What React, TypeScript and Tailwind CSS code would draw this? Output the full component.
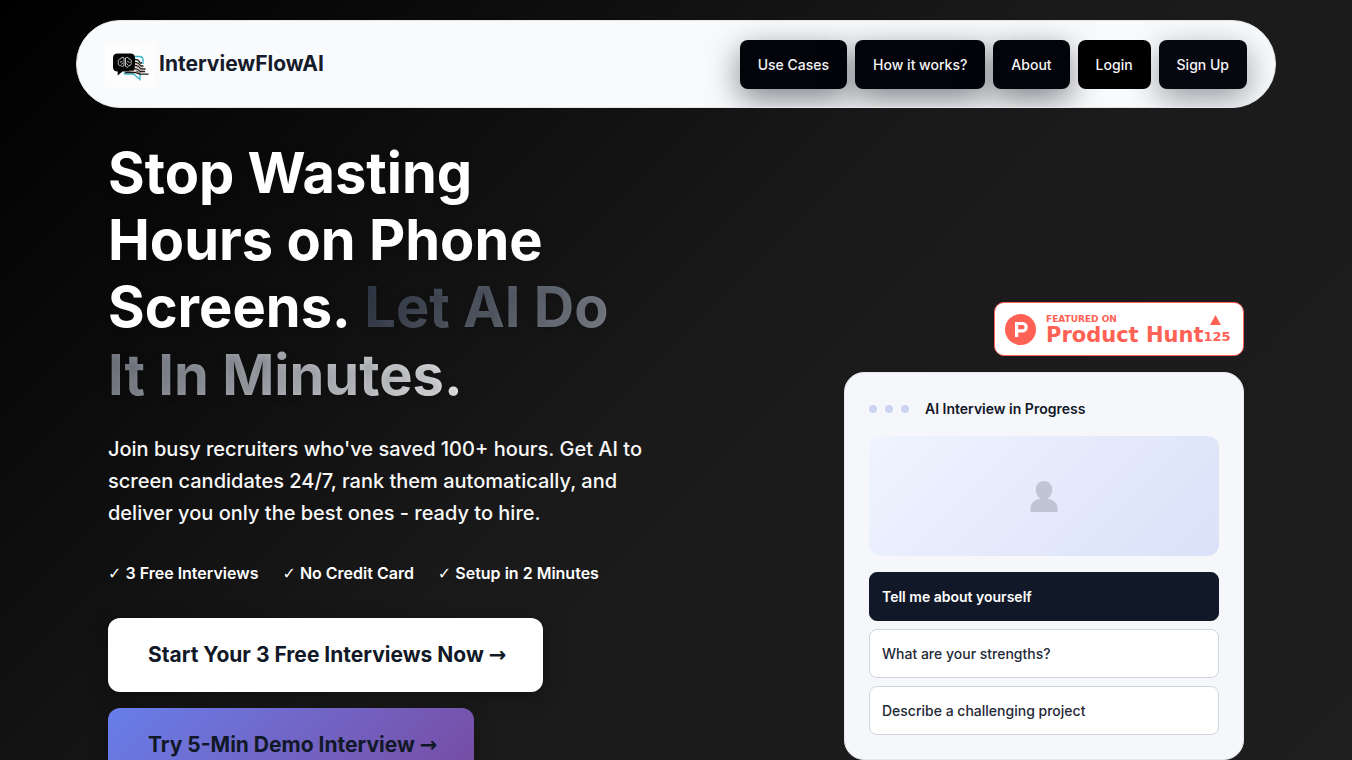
import React from "react";

const navLinks = [
  { label: "Use Cases", tone: "bg-[#030409] shadow-[0_10px_32px_rgba(3,7,18,0.5)]" },
  { label: "How it works?", tone: "bg-[#030409] shadow-[0_10px_32px_rgba(3,7,18,0.5)]" },
  { label: "About", tone: "bg-[#030409] shadow-[0_10px_32px_rgba(3,7,18,0.5)]" },
  { label: "Login", tone: "relative bg-black" },
  { label: "Sign Up", tone: "bg-[#07080f] shadow-[0_10px_32px_rgba(3,7,18,0.4)]" },
];

const perks = ["3 Free Interviews", "No Credit Card", "Setup in 2 Minutes"];

const questions = [
  { text: "Tell me about yourself", active: true },
  { text: "What are your strengths?", active: false },
  { text: "Describe a challenging project", active: false },
];

function LogoMark() {
  return (
    <svg className="h-11 w-[50px] shrink-0" viewBox="0 0 50 44" aria-hidden="true">
      <rect width="50" height="44" fill="#fdfdfe" />
      <path
        d="M30 13.500h4.500q3.500 0 3.500 3.500v4M19 29.500q0 1.500 2 1.500h7.500l6.500 5.500v-7"
        fill="none"
        stroke="#3fb3cc"
        strokeWidth="1.400"
      />
      <path
        d="M12.500 10.500h13q4.500 0 4.500 4.500v9q0 4.500-4.500 4.500H17.500l-4.800 4v-4Q8 28.500 8 24V15q0-4.500 4.500-4.500z"
        fill="#050505"
      />
      <path
        d="M19 15c-1.500-1.300-3.300-.3-3.300 1-2.200 0-3.200 2-2.200 3.200-1 1.600.2 3.600 2.200 3.300.8 1.400 3.300 1.200 3.300-.5zM20.500 15c1.500-1.300 3.300-.3 3.300 1 2.200 0 3.200 2 2.200 3.200 1 1.600-.2 3.600-2.200 3.300-.8 2.500-3.300 2.500-3.300-.5zM15 19.300l2.300-1M16.300 21.300l1.700-1.300M24.500 19.300l-2.300-1M23 21.800l-1.600-1.500"
        fill="none"
        stroke="#d8d8d8"
        strokeWidth="0.900"
      />
      <path
        d="M30 16.500l3 .5 2.500 3h1.500M30 19.500l3 .5 3 3h2.500M30 22.500l3 .5 3 3h4.500M28 25.500l4 .5 3.500 2.500h4.500M20 29.500h10l5 1.700h8.500M31 28l4 2"
        fill="none"
        stroke="#1c1c1c"
        strokeWidth="1.300"
      />
      <path d="M30 21l3 .5 3 3h2M29 24l3.500.5 3 2.700h3M24 28h6l4 1.700h4" fill="none" stroke="#d3a896" strokeWidth="0.700" />
    </svg>
  );
}

function Header() {
  return (
    <header className="mx-auto flex w-full max-w-[1200px] items-center justify-between overflow-hidden rounded-full border border-[#e2e5ea] bg-[#f9fafc] px-7 pt-[19px] pb-[18px]">
      <a href="#" className="flex items-center gap-1">
        <LogoMark />
        <span className="pb-0.5 text-[21px] leading-6 font-bold text-[#151b2b]">InterviewFlowAI</span>
      </a>
      <nav aria-label="Main" className="flex items-center gap-2">
        {navLinks.map((link) => (
          <a
            key={link.label}
            href="#"
            className={`rounded-lg px-[18px] py-[13px] text-[14px] leading-[23px] font-medium text-[#f4f4f6] ${link.tone}`}
          >
            {link.label}
          </a>
        ))}
      </nav>
    </header>
  );
}

function ProductHuntBadge() {
  return (
    <a
      href="#"
      className="flex h-[54px] w-[250px] items-center rounded-[10px] border border-[#ff6154] bg-white pl-[10px] font-['DejaVu_Sans',sans-serif] font-bold text-[#ff6154]"
    >
      <svg className="h-[31px] w-[31px] shrink-0" viewBox="0 0 31 31" aria-hidden="true">
        <circle cx="15.500" cy="15.500" r="15.500" fill="#ff6154" />
        <path
          d="M10 8h7.600a5.200 5.200 0 0 1 0 10.400H13.200V23H10zM13.200 11.100v4.200h4.300a2.100 2.100 0 0 0 0-4.200z"
          fill="#fff"
          fillRule="evenodd"
        />
      </svg>
      <span className="ml-[10px] flex flex-col pt-0.5">
        <span className="text-[9px] leading-[11px]">FEATURED ON</span>
        <span className="text-[21px] leading-[21px] whitespace-nowrap">Product Hunt</span>
      </span>
      <span className="flex flex-col items-center pt-0.5">
        <svg className="mr-1 h-[10px] w-[11px]" viewBox="0 0 11 10" aria-hidden="true">
          <path d="M5.500 0L11 10H0z" fill="#ff6154" />
        </svg>
        <span className="mt-1 text-[13px] leading-[16px]">125</span>
      </span>
    </a>
  );
}

function InterviewCard() {
  return (
    <section className="w-[400px] rounded-[20px] border border-[#e6e9f0] bg-[#f6f7fb] p-6">
      <div className="flex items-center gap-4">
        <div className="flex gap-2" aria-hidden="true">
          <span className="h-2 w-2 rounded-full bg-[#cdd5f3]" />
          <span className="h-2 w-2 rounded-full bg-[#cdd5f3]" />
          <span className="h-2 w-2 rounded-full bg-[#cdd5f3]" />
        </div>
        <h2 className="text-[14px] leading-[23px] font-semibold text-[#111827]">AI Interview in Progress</h2>
      </div>
      <div className="mt-4 flex h-[120px] items-center justify-center rounded-xl bg-linear-135 from-[#eff4ff] to-[#dbe1f8]">
        <svg className="h-[31px] w-7" viewBox="0 0 28 31" aria-hidden="true">
          <path
            d="M14 0c5 0 8.200 3.800 8.200 8.800 0 3.800-1.700 6.500-4 8.200v1c5.500.8 9.300 4 9.300 9.500V31H.5v-3.500C.5 22 4.300 18.800 9.800 18v-1c-2.300-1.700-4-4.400-4-8.200C5.800 3.800 9 0 14 0z"
            fill="#bfc5d5"
          />
        </svg>
      </div>
      <ul className="mt-4 flex flex-col gap-2">
        {questions.map((q) => (
          <li
            key={q.text}
            className={`rounded-lg border p-3 text-[14px] leading-[23px] ${
              q.active
                ? "border-[#111827] bg-[#111827] font-semibold text-white"
                : "border-[#d1d5db] bg-white font-medium text-[#1f2937]"
            }`}
          >
            {q.text}
          </li>
        ))}
      </ul>
    </section>
  );
}

export default function App() {
  return (
    <div className="min-h-screen bg-[linear-gradient(135deg,#000000_0%,#1a1a1a_50%,#1e1e1e_100%)] px-5 pt-5 font-[Inter,sans-serif]">
      <Header />
      <main className="mx-auto flex w-full max-w-[1200px] items-start justify-between px-8 pt-8">
        <div className="max-w-[536px]">
          <h1 className="text-[56px] leading-[1.2] font-bold text-white [text-shadow:0_2px_8px_rgba(0,0,0,0.2)]">
            Stop Wasting Hours on Phone Screens.{" "}
            <span className="ml-0.5 bg-[linear-gradient(135deg,#2b3443,#f0f1f3)] bg-clip-text text-transparent">
              Let AI Do It In Minutes.
            </span>
          </h1>
          <p className="mt-6 text-[20px] leading-8 font-medium text-[#f8f8f8]">
            Join busy recruiters who've saved 100+ hours. Get AI to screen candidates 24/7, rank them automatically,
            and deliver you only the best ones - ready to hire.
          </p>
          <ul className="mt-8 flex gap-6 text-[16px] leading-[25px] font-semibold whitespace-nowrap text-white">
            {perks.map((perk) => (
              <li key={perk}>
                <span className="font-['DejaVu_Sans',sans-serif] leading-none font-normal">✓</span> {perk}
              </li>
            ))}
          </ul>
          <div className="mt-8 flex flex-col items-start gap-4">
            <a
              href="#"
              className="rounded-xl bg-white py-5 pr-[37px] pl-10 text-[21px] leading-[34px] font-bold whitespace-nowrap text-[#111827] shadow-[0_4px_20px_rgba(0,0,0,0.3)]"
            >
              Start Your 3 Free Interviews Now{" "}
              <span className="font-['DejaVu_Sans',sans-serif] leading-none">→</span>
            </a>
            <a
              href="#"
              className="rounded-xl bg-linear-135 from-[#667eea] to-[#764ba2] py-5 pr-[37px] pl-10 text-[21px] leading-[34px] font-bold whitespace-nowrap text-[#111827] shadow-[0_4px_20px_rgba(0,0,0,0.3)]"
            >
              Try 5-Min Demo Interview{" "}
              <span className="font-['DejaVu_Sans',sans-serif] leading-none">→</span>
            </a>
          </div>
        </div>
        <div className="flex flex-col items-end gap-4 pt-[162px]">
          <ProductHuntBadge />
          <InterviewCard />
        </div>
      </main>
    </div>
  );
}
